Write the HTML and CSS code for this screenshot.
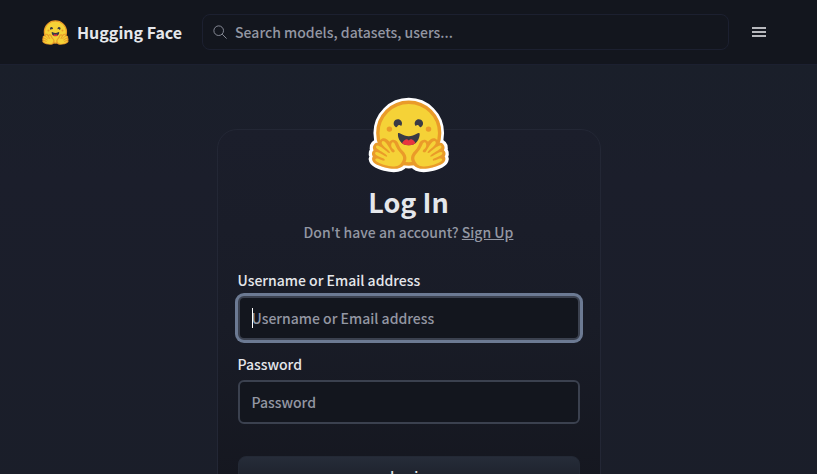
FILE: index.html
```html
<!DOCTYPE html>
<html lang="en">
<head>
<meta charset="utf-8">
<meta name="viewport" content="width=device-width, initial-scale=1">
<title>Log In</title>
<link rel="stylesheet" href="styles.css">
</head>
<body>
<svg class="defs" aria-hidden="true">
  <defs>
    <clipPath id="mouth-clip"><path d="M47.2 56.3C57 56.3 60.2 47.5 60.2 43C60.2 40.7 58.6 41.4 56.1 42.7C53.8 43.8 50.7 45.4 47.2 45.4C43.7 45.4 40.6 43.8 38.3 42.7C35.8 41.4 34.2 40.7 34.2 43C34.2 47.5 37.4 56.3 47.2 56.3Z"/></clipPath>
    <path id="palm" d="M17.5238 48C15.9048 48 14.4578 48.665 13.4488 49.871C12.8248 50.618 12.1728 51.822 12.1198 53.625C11.4408 53.43 10.7878 53.321 10.1778 53.321C8.6278 53.321 7.2278 53.915 6.2378 54.994C4.9658 56.379 4.4008 58.081 4.6468 59.784C4.7638 60.595 5.0348 61.322 5.4398 61.995C4.5858 62.686 3.9568 63.648 3.6528 64.805C3.4148 65.712 3.1708 67.601 4.4448 69.547C4.3638 69.674 4.2878 69.806 4.2168 69.941C3.4508 71.395 3.4018 73.038 4.0778 74.568C5.1028 76.887 7.6498 78.714 12.5958 80.675C15.6728 81.895 18.4878 82.675 18.5128 82.682C22.5808 83.737 26.2598 84.273 29.4448 84.273C35.2988 84.273 39.4898 82.48 41.9018 78.944C45.7838 73.25 45.2288 68.042 40.2058 63.022C37.4258 60.244 35.5778 56.148 35.1928 55.248C34.4168 52.586 32.3648 49.627 28.9538 49.627C28.6658 49.627 28.3758 49.65 28.0898 49.695C26.5958 49.93 25.2898 50.79 24.3558 52.084C23.3478 50.831 22.3698 49.835 21.4848 49.273C20.1508 48.427 18.8178 48 17.5238 48Z"/>
    <g id="hand">
      <use href="#palm" fill="#ea9b29"/>
      <path fill="#f5d237" d="M38.5758 76.6898C41.4508 72.4727 41.2468 69.3081 37.3008 65.3643C33.3548 61.4215 31.0578 55.6543 31.0578 55.6543C31.0578 55.6543 30.1998 52.3025 28.2448 52.6104C26.2898 52.9183 24.8548 58.0281 28.9488 61.0926C33.0428 64.1561 28.1338 66.2374 26.5578 63.3608C24.9828 60.4842 20.6818 53.0887 18.4518 51.6745C16.2228 50.2602 14.6528 51.0527 15.1788 53.9683C15.4398 55.4176 18.0438 57.7869 20.4768 60.0004C22.9448 62.2455 25.2378 64.3316 24.7898 65.0849C23.9008 66.5816 20.7678 63.3258 20.7678 63.3258C20.7678 63.3258 10.9628 54.4018 8.8278 56.7266C6.8598 58.8703 9.9558 60.6654 14.7858 63.5898L16.0648 64.3657C21.5928 67.7114 22.0218 68.5937 21.2378 69.8594C20.9478 70.3266 19.1108 69.2241 16.8548 67.87C13.0038 65.5587 7.9278 62.5124 7.2118 65.2389C6.5918 67.5982 10.3138 69.0406 13.6908 70.3492C16.5038 71.4394 19.0718 72.4347 18.6928 73.7895C18.2998 75.1938 16.1738 74.3355 13.8488 73.3973C11.2378 72.3439 8.3778 71.1898 7.4648 72.9209C5.7418 76.1924 19.3598 80.0431 19.4718 80.0729C23.8728 81.2139 35.0478 83.6316 38.5758 76.6898Z"/>
    </g>
    <g id="face">
      <circle cx="47.2" cy="41.75" r="36.75" fill="#f5d237" stroke="#ea9b29" stroke-width="4"/>
      <g id="features">
        <path fill="#3a3b45" d="M58.5024 32.2915C59.7768 32.7415 60.2839 35.3615 61.5713 34.6769C64.0095 33.3805 64.9351 30.353 63.6387 27.9148C62.3423 25.4767 59.3148 24.5511 56.8766 25.8475C54.4384 27.1439 53.5128 30.1714 54.8092 32.6096C55.4211 33.7604 57.3632 31.8892 58.5024 32.2915Z"/>
        <path fill="#3a3b45" d="M34.9454 32.2915C33.671 32.7415 33.164 35.3615 31.8766 34.6769C29.4384 33.3805 28.5128 30.353 29.8092 27.9148C31.1056 25.4767 34.1331 24.5511 36.5713 25.8475C39.0095 27.1439 39.9351 30.1714 38.6387 32.6096C38.0268 33.7604 36.0846 31.8892 34.9454 32.2915Z"/>
        <g clip-path="url(#mouth-clip)">
          <path fill="#3a3b45" d="M30 36h35v24H30z"/>
          <path fill="#e8353f" d="M38.5 57C39 52 43 49 45 49.2C46.5 49.4 46.8 50.6 47.2 50.6C47.6 50.6 48 49.4 49.5 49.2C52 49 55.5 52 56 57Z"/>
        </g>
        <circle cx="70.7" cy="37" r="3.25" fill="#ea9b29"/>
        <circle cx="24.2" cy="37" r="3.25" fill="#ea9b29"/>
      </g>
      <use href="#hand"/>
      <use href="#hand" transform="matrix(-1 0 0 1 94.4 0)"/>
    </g>
  </defs>
</svg>

<header class="topbar">
  <a class="brand" href="#">
    <svg class="brand-logo" viewBox="3 2 89 83" aria-hidden="true"><use href="#face"/></svg>
    <span>Hugging Face</span>
  </a>
  <label class="search">
    <svg class="search-icon" viewBox="0 0 16 16" aria-hidden="true"><circle cx="6.5" cy="6.5" r="5.5"/><path d="M10.5 10.5 15.5 15.5"/></svg>
    <input type="search" placeholder="Search models, datasets, users..." aria-label="Search models, datasets, users">
  </label>
  <button class="menu" type="button" aria-label="Menu">
    <svg viewBox="0 0 14 10" aria-hidden="true"><path d="M0 0h14v2H0zM0 4h14v2H0zM0 8h14v2H0z"/></svg>
  </button>
</header>

<main class="page">
  <form class="card">
    <svg class="sticker" viewBox="0 0 95 88" aria-hidden="true">
      <g fill="#fff" stroke="#fff" stroke-width="8" stroke-linejoin="round">
        <circle cx="47.2" cy="41.75" r="38"/>
        <use href="#palm"/>
        <use href="#palm" transform="matrix(-1 0 0 1 94.4 0)"/>
      </g>
      <use href="#face"/>
    </svg>
    <h1>Log In</h1>
    <p class="signup">Don't have an account? <a href="#">Sign Up</a></p>
    <div class="field">
      <label for="username">Username or Email address</label>
      <div class="control">
        <input class="active" id="username" type="text" placeholder="Username or Email address">
        <span class="caret" aria-hidden="true"></span>
      </div>
    </div>
    <div class="field">
      <label for="password">Password</label>
      <div class="control">
        <input id="password" type="password" placeholder="Password">
      </div>
    </div>
    <button class="login" type="submit">Login</button>
  </form>
</main>
</body>
</html>
```

FILE: styles.css
```css
*,
*::before,
*::after {
  box-sizing: border-box;
}

body {
  margin: 0;
  height: 100vh;
  overflow: hidden;
  display: flex;
  flex-direction: column;
  background: #1a1f2b;
  color: #e5e7eb;
  font: 500 14px/24px "Noto Sans CJK SC", "Noto Sans", sans-serif;
}

input,
button {
  font: inherit;
  color: inherit;
}

input::placeholder {
  color: #9397a3;
  opacity: 1;
}

.defs {
  position: absolute;
  width: 0;
  height: 0;
}

.topbar {
  flex: none;
  display: flex;
  align-items: center;
  height: 65px;
  padding: 0 48px 0 42px;
  background: #13161e;
  border-bottom: 1px solid #1c2030;
}

.brand {
  display: flex;
  align-items: center;
  gap: 8px;
  margin-right: 20px;
  color: #e5e7eb;
  font-size: 16px;
  font-weight: 700;
  text-decoration: none;
  white-space: nowrap;
}

.brand-logo {
  width: 27px;
  height: 25px;
}

.search {
  flex: 1;
  display: flex;
  align-items: center;
  gap: 8px;
  height: 36px;
  padding: 0 10px;
  border: 1px solid #1c2030;
  border-radius: 8px;
}

.search-icon {
  flex: none;
  width: 14px;
  height: 14px;
  fill: none;
  stroke: #9397a3;
  stroke-width: 1;
  overflow: visible;
}

.search input {
  flex: 1;
  min-width: 0;
  padding: 0;
  border: 0;
  outline: 0;
  background: none;
}

.menu {
  display: flex;
  margin-left: 20px;
  padding: 3px;
  border: 0;
  background: none;
}

.menu svg {
  width: 14px;
  height: 10px;
  fill: #b7b8bd;
}

.page {
  flex: 1;
  display: flex;
  justify-content: center;
  align-items: flex-start;
  padding: 64px 20px 0;
  background: linear-gradient(#1a1f2a, #1b1e2b 25%, #1a1e29);
}

.card {
  display: flex;
  flex-direction: column;
  width: 100%;
  max-width: 384px;
  padding: 0 20px 24px;
  border: 1px solid #232735;
  border-radius: 20px;
  background: linear-gradient(#1b1e2b, #191c27 50%, #14161e);
}

.sticker {
  align-self: center;
  width: 80px;
  height: 74px;
  margin-top: -32px;
  overflow: visible;
}

h1 {
  margin: 12px 0 0;
  font-size: 27px;
  line-height: 36px;
  font-weight: 700;
  text-align: center;
}

.signup {
  margin: 0 0 24px;
  color: #9397a3;
  text-align: center;
}

.signup a {
  color: inherit;
}

.field {
  display: flex;
  flex-direction: column;
  gap: 4px;
  margin-bottom: 12px;
}

.control {
  position: relative;
}

.control input {
  display: block;
  width: 100%;
  height: 44px;
  padding: 0 12px;
  border: 2px solid #3b414f;
  border-radius: 6px;
  outline: 0;
  background: #13161e;
}

.control .active,
.control input:focus {
  box-shadow: 0 0 0 3px #6c7a93;
}

.caret {
  position: absolute;
  left: 14px;
  top: 12px;
  width: 1px;
  height: 20px;
  background: #fff;
}

.login {
  height: 40px;
  margin-top: 20px;
  border: 1px solid #232935;
  border-radius: 8px;
  background: linear-gradient(#262c39, #161922);
}
```
